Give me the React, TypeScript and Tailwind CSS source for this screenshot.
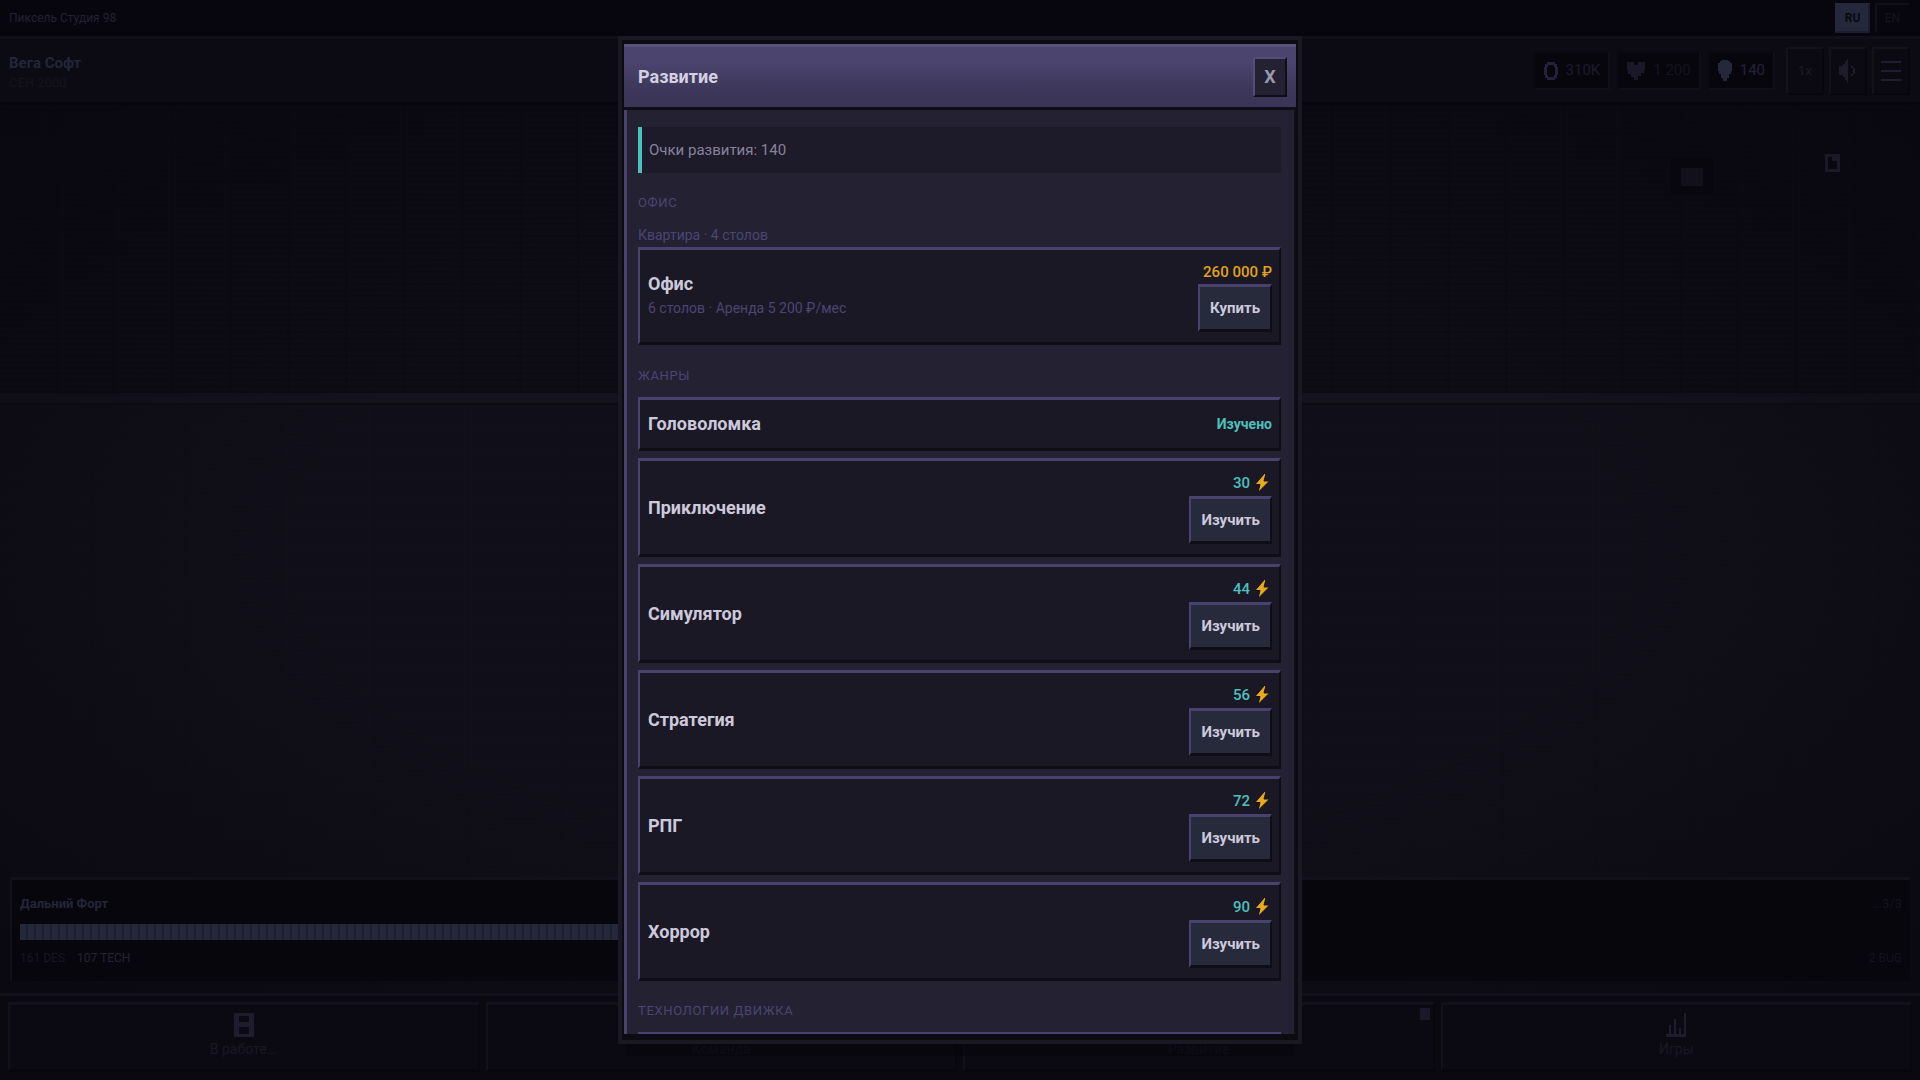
import type { ReactNode } from "react";

type Genre = { name: string; cost: number };

const genres: Genre[] = [
  { name: "Приключение", cost: 30 },
  { name: "Симулятор", cost: 44 },
  { name: "Стратегия", cost: 56 },
  { name: "РПГ", cost: 72 },
  { name: "Хоррор", cost: 90 },
];

function Bolt() {
  return (
    <svg width="16" height="20" viewBox="0 0 16 20" aria-hidden="true">
      <path d="M10.500 .5 1 11.500h5L4 19.500 15.500 8H10L12 .5Z" fill="#e8a91f" stroke="#12101a" strokeWidth="1" />
    </svg>
  );
}

function CoinIcon() {
  return (
    <svg width="14" height="18" viewBox="0 0 14 18" shapeRendering="crispEdges" fill="#24223a" aria-hidden="true">
      <path d="M3 0h8v3H3zM3 15h8v3H3zM1 2h3v3H1zM10 2h3v3h-3zM0 5h3v8H0zM11 5h3v8h-3zM1 13h3v3H1zM10 13h3v3h-3z" />
    </svg>
  );
}

function HeartIcon() {
  return (
    <svg width="18" height="18" viewBox="0 0 18 18" shapeRendering="crispEdges" fill="#1b1929" aria-hidden="true">
      <path d="M0 0h7v3h4V0h7v8h-1v3h-3v3h-3v4H7v-3H4v-3H1V8H0z" />
    </svg>
  );
}

function BulbIcon() {
  return (
    <svg width="14" height="21" viewBox="0 0 14 21" shapeRendering="crispEdges" fill="#25283a" aria-hidden="true">
      <path d="M4 0h6v1h2v2h2v8h-1v3h-2v4H9v3H5v-3H3v-4H1v-3H0V3h2V1h2z" />
    </svg>
  );
}

function SpeakerIcon() {
  return (
    <svg width="18" height="24" viewBox="0 0 18 24" shapeRendering="crispEdges" fill="#1d1b2c" aria-hidden="true">
      <path d="M0 7h4V5h2V2h2V0h1v24H8v-3H6v-3H4v-2H0zM12 7h2v2h-2zM14 9h2v6h-2zM12 15h2v2h-2z" />
    </svg>
  );
}

function MenuIcon() {
  return (
    <svg width="20" height="20" viewBox="0 0 20 20" shapeRendering="crispEdges" fill="#1f1d31" aria-hidden="true">
      <path d="M0 0h20v2H0zM0 9h20v2H0zM0 18h20v2H0z" />
    </svg>
  );
}

function CabinetIcon() {
  return (
    <svg width="20" height="24" viewBox="0 0 20 24" shapeRendering="crispEdges" aria-hidden="true">
      <path d="M0 0h20v24H0zM5 3v6h10V3zM5 14v7h10v-7z" fill="#1e1c2e" fillRule="evenodd" />
    </svg>
  );
}

function ChartIcon() {
  return (
    <svg width="20" height="24" viewBox="0 0 20 24" shapeRendering="crispEdges" fill="#1e1c2e" aria-hidden="true">
      <path d="M0 21h20v3H0zM3 12h2v10H3zM8 6h2v16H8zM13 15h2v7h-2zM18 0h2v22h-2z" />
    </svg>
  );
}

function Pill({ icon, children }: { icon: ReactNode; children: ReactNode }) {
  return (
    <div className="flex h-[39px] items-center gap-2 border-2 border-t-[#09070f] border-r-[#100f19] border-b-[#100f19] border-l-[#09070f] bg-[#07060d] px-2">
      {icon}
      {children}
    </div>
  );
}

function ToolButton({ label, children }: { label: string; children: ReactNode }) {
  return (
    <button
      aria-label={label}
      className="flex h-12 w-[38px] items-center justify-center border-2 border-t-[#13111c] border-r-[#07060d] border-b-[#07060d] border-l-[#13111c] bg-[#0b0a12] text-[13px] text-[#1d1b2c]"
    >
      {children}
    </button>
  );
}

function NavButton({ label, icon, badge }: { label: string; icon?: ReactNode; badge?: boolean }) {
  return (
    <button className="relative flex h-[70px] flex-1 flex-col items-center border-t-3 border-r-2 border-b-3 border-l-2 border-t-[#12111b] border-r-[#08070e] border-b-[#07060d] border-l-[#12111b] bg-[#0b0a12] pt-2 text-sm text-[#1a1828]">
      <span className="flex h-6 items-center">{icon}</span>
      <span className="mt-0.5 leading-5">{label}</span>
      {badge && <span className="absolute top-[3px] right-[3px] h-3 w-2.5 bg-[#1b1929]" />}
    </button>
  );
}

function SectionTitle({ children }: { children: ReactNode }) {
  return <h3 className="text-[13px] leading-5 tracking-wider text-[#4c4574] uppercase">{children}</h3>;
}

function Card({ children }: { children: ReactNode }) {
  return (
    <div className="flex items-center justify-between border-t-3 border-r-2 border-b-3 border-l-2 border-t-[#49426f] border-r-[#0f0d15] border-b-[#0f0d15] border-l-[#49426f] bg-[#1b1825] py-2.5 pr-[7px] pl-2">
      {children}
    </div>
  );
}

function BuyButton({ children }: { children: ReactNode }) {
  return (
    <button className="h-12 border-t-3 border-r-2 border-b-3 border-l-2 border-t-[#49426f] border-r-[#0f0d15] border-b-[#0f0d15] border-l-[#49426f] bg-[#272a3b] px-2.5 text-[15px] font-bold text-[#cdc9dc]">
      {children}
    </button>
  );
}

function GameScreen() {
  return (
    <div className="flex min-h-screen flex-col bg-[#07060d]">
      <div className="flex h-[39px] items-center justify-between border-b-3 border-[#110f1a] bg-[#07060e] pr-2.5 pl-[9px]">
        <span className="text-xs text-[#232135]">Пиксель Студия 98</span>
        <div className="flex gap-[5px]">
          <button className="h-[30px] w-[35px] border-2 border-t-[#25283a] border-r-[#1c1d2c] border-b-[#1c1d2c] border-l-[#25283a] bg-[#25283a] text-xs font-bold text-[#09080f]">
            RU
          </button>
          <button className="h-[30px] w-[35px] border-2 border-t-[#100f19] border-r-[#07060d] border-b-[#07060d] border-l-[#100f19] text-xs text-[#15141f]">
            EN
          </button>
        </div>
      </div>

      <header className="flex h-[66px] items-center justify-between border-b-3 border-[#07060d] bg-[#0c0b13] pr-2.5 pl-[9px]">
        <div className="pt-1">
          <div className="text-[15px] leading-5 font-bold text-[#232539]">Вега Софт</div>
          <div className="text-[13px] leading-5 text-[#15131f]">СЕН 2000</div>
        </div>
        <div className="flex items-center gap-[7px] text-[15px]">
          <Pill icon={<CoinIcon />}>
            <span className="text-[#1e1c2e]">310K</span>
          </Pill>
          <Pill icon={<HeartIcon />}>
            <span className="text-[#161422]">1 200</span>
          </Pill>
          <Pill icon={<BulbIcon />}>
            <span className="text-[#24223a]">140</span>
          </Pill>
          <div className="flex gap-[5px] pl-1">
            <ToolButton label="Скорость">1x</ToolButton>
            <ToolButton label="Звук">
              <SpeakerIcon />
            </ToolButton>
            <ToolButton label="Меню">
              <MenuIcon />
            </ToolButton>
          </div>
        </div>
      </header>

      <div className="relative flex flex-1 flex-col">
        <div className="h-[288px] bg-[#0e0c15] bg-[repeating-linear-gradient(90deg,transparent_0px,transparent_55px,#0c0a13_55px,#0c0a13_58px),repeating-linear-gradient(180deg,transparent_0px,transparent_4px,#0c0b13_4px,#0c0b13_6px)]" />
        <div className="h-3 border-b-2 border-[#0c0b13] bg-[#14121d]" />
        <div className="flex-1 bg-[#110f19] bg-[repeating-linear-gradient(90deg,transparent_0px,transparent_91px,#100e18_91px,#100e18_94px),repeating-linear-gradient(180deg,transparent_0px,transparent_4px,#100e18_4px,#100e18_6px)]" />
        <div className="pointer-events-none absolute inset-0 bg-[radial-gradient(ellipse_75%_75%_at_50%_50%,transparent_45%,#07060dcc_100%)]" />
        <div className="absolute top-[54px] right-[207px] flex h-9 w-[42px] items-center justify-center bg-[#08070e]">
          <div className="h-[18px] w-[22px] bg-[#12111b]" />
        </div>
        <div className="absolute top-[49px] right-20 h-[18px] w-[15px] border-3 border-[#1b1927] bg-[#09080f]">
          <div className="ml-1 h-1 w-[5px] bg-[#1b1927]" />
        </div>

        <section className="absolute inset-x-2.5 bottom-3 h-[104px] border-t-3 border-l-2 border-[#12111b] bg-[#07060d] px-2">
          <div className="mt-3 flex items-center justify-between leading-6">
            <span className="text-[13px] font-bold text-[#232539]">Дальний Форт</span>
            <span className="text-[13px] text-[#15131f]">…3/3</span>
          </div>
          <div className="mt-2 h-4">
            <div className="h-full w-3/5 bg-[repeating-linear-gradient(90deg,#25283a_0px,#25283a_6px,#1d1f2f_6px,#1d1f2f_8px)]" />
          </div>
          <div className="mt-2 flex items-center justify-between text-xs leading-5">
            <div className="flex gap-3">
              <span className="text-[#181624]">161 DES</span>
              <span className="text-[#24223a]">107 TECH</span>
            </div>
            <span className="text-[#15131f]">2 BUG</span>
          </div>
        </section>
      </div>

      <nav className="flex gap-1.5 border-t-3 border-[#12111b] bg-[#0a0910] px-2 pt-1.5 pb-2">
        <NavButton label="В работе..." icon={<CabinetIcon />} />
        <NavButton label="Команда" />
        <NavButton label="Развитие" badge />
        <NavButton label="Игры" icon={<ChartIcon />} />
      </nav>
    </div>
  );
}

function DevelopmentDialog() {
  return (
    <div className="fixed inset-0 flex items-center justify-center">
      <div
        role="dialog"
        aria-labelledby="dialog-title"
        className="flex max-h-[calc(100vh-72px)] w-[684px] max-w-full flex-col border-4 border-[#1a1825] bg-[#0d0b12] px-0.5 pt-1 pb-1.5 shadow-[0_20px_0_-8px_#06050b99]"
      >
        <div className="flex h-[66px] shrink-0 items-center justify-between border-t-3 border-b-3 border-t-[#58527c] border-b-[#0f0d15] bg-linear-to-b from-[#4b446e] from-25% to-[#3b3557] to-80% pr-[9px] pl-3.5">
          <h2 id="dialog-title" className="text-lg font-bold text-[#d3d0e0]">
            Развитие
          </h2>
          <button
            aria-label="Закрыть"
            className="flex h-10 w-[34px] items-center justify-center border-2 border-t-[#544d7a] border-r-[#0f0d15] border-b-[#0f0d15] border-l-[#544d7a] bg-[#232132] text-lg font-bold text-[#9a97ab]"
          >
            X
          </button>
        </div>
        <div className="min-h-0 flex-1 overflow-hidden border-r-2 border-l-3 border-r-[#0f0d15] border-l-[#49426f] bg-[#232132] pt-[17px] pr-[13px] pl-[11px]">
          <div className="border-l-4 border-[#4cc0bd] bg-[#1d1a2a] px-[7px] py-[11px] text-[15px] leading-6 text-[#86839a]">
            Очки развития: 140
          </div>

          <div className="mt-5">
            <SectionTitle>Офис</SectionTitle>
          </div>
          <p className="mt-3 mb-0.5 text-sm leading-5 text-[#4c4574]">Квартира · 4 столов</p>
          <Card>
            <div>
              <div className="text-lg leading-6 font-bold text-[#cdc9dc]">Офис</div>
              <div className="text-sm leading-6 text-[#4c4574]">6 столов · Аренда 5 200 ₽/мес</div>
            </div>
            <div className="flex flex-col items-end">
              <div className="text-[15px] leading-6 font-medium text-[#e0a21f]">260 000 ₽</div>
              <BuyButton>Купить</BuyButton>
            </div>
          </Card>

          <div className="mt-[21px] mb-[11px]">
            <SectionTitle>Жанры</SectionTitle>
          </div>
          <div className="flex flex-col gap-[7px]">
            <Card>
              <div className="text-lg leading-7 font-bold text-[#cdc9dc]">Головоломка</div>
              <div className="text-sm font-bold text-[#4cc0bd]">Изучено</div>
            </Card>
            {genres.map((genre) => (
              <Card key={genre.name}>
                <div className="text-lg leading-7 font-bold text-[#cdc9dc]">{genre.name}</div>
                <div className="flex flex-col items-end gap-px">
                  <div className="flex items-center gap-1 pr-0.5 text-[15px] leading-6 font-medium text-[#4cc0bd]">
                    <span>{genre.cost}</span>
                    <Bolt />
                  </div>
                  <BuyButton>Изучить</BuyButton>
                </div>
              </Card>
            ))}
          </div>

          <div className="mt-5 mb-[11px]">
            <SectionTitle>Технологии движка</SectionTitle>
          </div>
          <div className="h-24 border-t-3 border-l-2 border-[#49426f] bg-[#1b1825]" />
        </div>
      </div>
    </div>
  );
}

export default function App() {
  return (
    <div className="font-['Roboto','Noto_Sans',sans-serif]">
      <GameScreen />
      <DevelopmentDialog />
    </div>
  );
}
